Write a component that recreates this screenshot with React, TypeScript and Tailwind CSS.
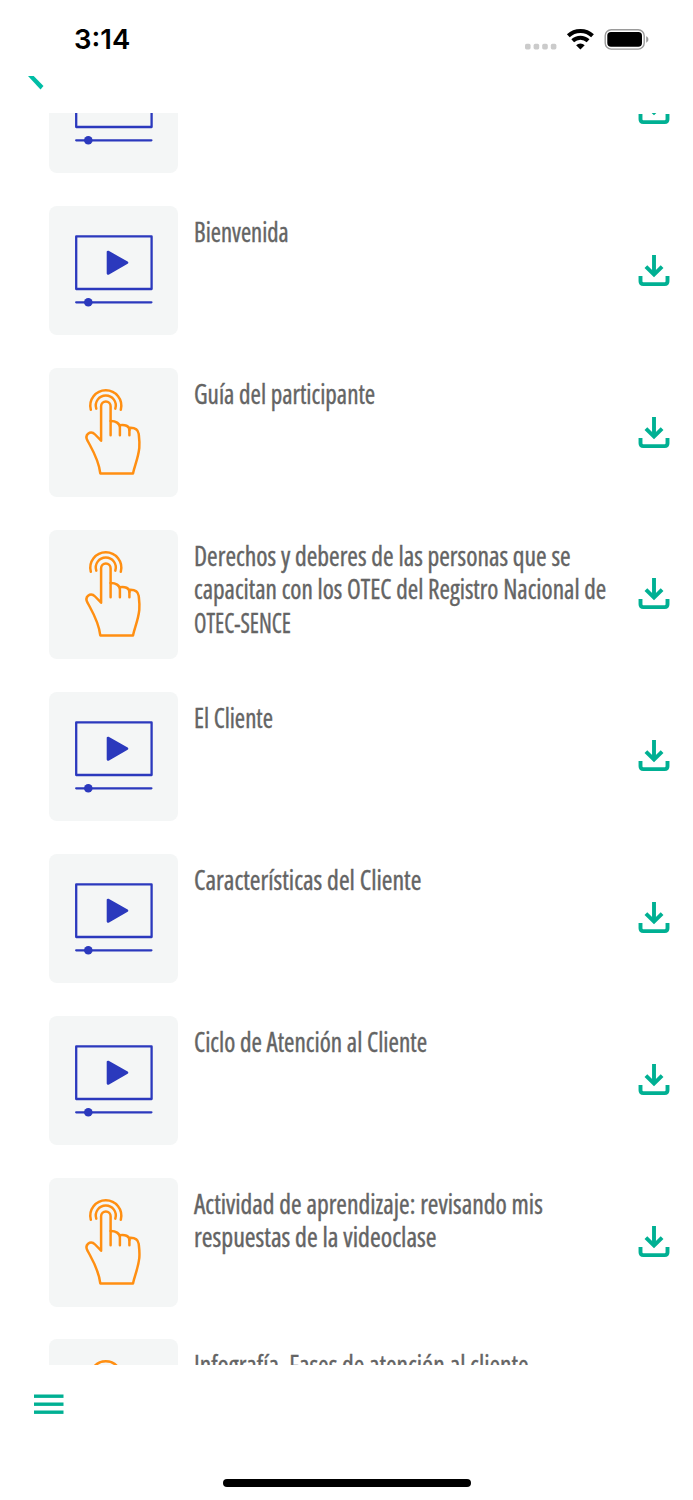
import React, { useLayoutEffect, useRef, useState } from 'react';

type Kind = 'video' | 'touch';

interface Line {
  text: string;
  width: number;
}

interface Lesson {
  id: number;
  kind: Kind;
  lines: Line[];
}

const lessons: Lesson[] = [
  { id: 1, kind: 'video', lines: [] },
  { id: 2, kind: 'video', lines: [{ text: 'Bienvenida', width: 95 }] },
  { id: 3, kind: 'touch', lines: [{ text: 'Guía del participante', width: 181 }] },
  {
    id: 4,
    kind: 'touch',
    lines: [
      { text: 'Derechos y deberes de las personas que se', width: 377 },
      { text: 'capacitan con los OTEC del Registro Nacional de', width: 412 },
      { text: 'OTEC-SENCE', width: 97 },
    ],
  },
  { id: 5, kind: 'video', lines: [{ text: 'El Cliente', width: 79 }] },
  { id: 6, kind: 'video', lines: [{ text: 'Características del Cliente', width: 227 }] },
  { id: 7, kind: 'video', lines: [{ text: 'Ciclo de Atención al Cliente', width: 233 }] },
  {
    id: 8,
    kind: 'touch',
    lines: [
      { text: 'Actividad de aprendizaje: revisando mis', width: 349 },
      { text: 'respuestas de la videoclase', width: 243 },
    ],
  },
  { id: 9, kind: 'touch', lines: [{ text: 'Infografía. Fases de atención al cliente', width: 335 }] },
];

// Squeezes a line horizontally so it takes exactly the given width
function CondensedLine({ text, width }: Line) {
  const ref = useRef<HTMLSpanElement>(null);
  const [scale, setScale] = useState(0.8);

  useLayoutEffect(() => {
    if (ref.current) setScale(width / ref.current.offsetWidth);
  }, [text, width]);

  return (
    <span className="block h-[33.4px] leading-[33.4px] whitespace-nowrap">
      <span ref={ref} className="inline-block origin-left" style={{ transform: `scaleX(${scale})` }}>
        {text}
      </span>
    </span>
  );
}

function VideoIcon() {
  return (
    <svg viewBox="0 0 129 129" className="size-full" fill="none" stroke="#2b39bd" strokeWidth="2.3">
      <rect x="27.2" y="30.4" width="75.4" height="52.6" strokeLinejoin="round" />
      <path d="M59 46v21.500l19-10.900z" fill="#2b39bd" strokeLinejoin="round" strokeWidth="2.600" />
      <path d="M27.200 96.300h75.200" strokeLinecap="round" />
      <circle cx="39.300" cy="96.300" r="4.300" fill="#2b39bd" stroke="none" />
    </svg>
  );
}

function TouchIcon() {
  return (
    <svg
      viewBox="0 0 129 129"
      className="size-full"
      fill="none"
      stroke="#ff8f12"
      strokeWidth="2.5"
      strokeLinecap="round"
      strokeLinejoin="round"
    >
      <path d="M41.800 41.700A15.500 15.500 0 1 1 71.800 41.700" />
      <path d="M47.300 40.600A10 10 0 1 1 66.300 40.600" />
      <path d="M61.600 67.300V38.200a4.750 4.750 0 0 0-9.500 0V72.700l-6-6.200c-2.200-2.200-5-2.300-7-.8-2.100 1.800-2 4.600-.4 7.300C43.500 82 49.700 91.500 51.300 105.400H84c1.500-7.500 5.200-15 6.300-25.500.5-6-.1-9.600-.6-14-.7-4.200-4.300-6.300-9.300-6v7.400" />
      <path d="M61.600 53c5-.1 9.300 2.300 9.300 6.500v7.800" />
      <path d="M70.900 57.200c5-.9 9.500.8 9.500 4.700" />
    </svg>
  );
}

function DownloadIcon() {
  return (
    <svg viewBox="0 0.9 32 32" className="size-8" fill="none" stroke="#00b093" strokeWidth="3.900">
      <path d="M2.500 22V27.200q0 2.800 2.800 2.800H26.700q2.800 0 2.800-2.800V22" />
      <path d="M16 .8V20" />
      <path d="M7.900 12.500l8.100 8 8.100-8" />
    </svg>
  );
}

function StatusBar() {
  return (
    <div className="flex h-[76px] items-start justify-between pl-[74px] pr-[43px] pt-[25px]">
      <span className="font-['Inter',sans-serif] text-[27.5px] leading-[29px] font-semibold text-black">3:14</span>
      <svg viewBox="0 0 126 26" className="mt-[2px] h-[26px] w-[126px]">
        <g fill="#cbcbcb">
          <rect x="1" y="16.800" width="5.600" height="5.600" rx="1.600" />
          <rect x="9.600" y="16.800" width="5.600" height="5.600" rx="1.600" />
          <rect x="18.200" y="16.800" width="5.600" height="5.600" rx="1.600" />
          <rect x="26.800" y="16.800" width="5.600" height="5.600" rx="1.600" />
        </g>
        <g fill="none" stroke="#000" strokeWidth="4">
          <path d="M44.300 8.800a17.600 17.600 0 0 1 24.200 0" />
          <path d="M48.700 13.700a11.200 11.200 0 0 1 15.400 0" />
        </g>
        <path d="M56.400 22.500l-4.300-4.300a6.200 6.200 0 0 1 8.600 0z" />
        <rect x="81.200" y="2.700" width="39" height="19.400" rx="6" fill="none" stroke="#9a9a9a" strokeWidth="1.400" />
        <rect x="83.300" y="5" width="34.700" height="14.800" rx="3.700" />
        <path d="M122.200 9.300c2.900 1.200 2.900 5.200 0 6.400z" fill="#9a9a9a" />
      </svg>
    </div>
  );
}

function LessonRow({ lesson }: { lesson: Lesson }) {
  return (
    <li className="flex h-[129px] shrink-0">
      <div className="w-[129px] shrink-0 overflow-hidden rounded-[8px] bg-[#f4f6f6]">
        {lesson.kind === 'video' ? <VideoIcon /> : <TouchIcon />}
      </div>
      <div className="ml-4 min-w-0 flex-1 pt-[9px] text-[28px] text-[#646464] font-['Open_Sans',sans-serif] [font-stretch:75%] [-webkit-text-stroke:0.4px_#646464]">
        {lesson.lines.map(line => (
          <CondensedLine key={line.text} text={line.text} width={line.width} />
        ))}
      </div>
      <button className="flex w-8 shrink-0 items-center justify-center">
        <DownloadIcon />
      </button>
    </li>
  );
}

export default function App() {
  return (
    <div className="flex h-[1500px] w-[693px] flex-col overflow-hidden bg-white">
      <StatusBar />
      <header className="h-[37px] shrink-0 pl-7">
        {/* back arrow, mostly hidden above the header */}
        <svg viewBox="0 0 16 14" className="h-[14px] w-4">
          <path d="M0 0h5.700L15.500 10l-3 3.400z" fill="#00bda5" />
        </svg>
      </header>

      <main className="h-[1252px] shrink-0 overflow-hidden">
        <ul className="-mt-[68.8px] flex flex-col gap-[32.92px] pl-[49px] pr-[23px]">
          {lessons.map(lesson => (
            <LessonRow key={lesson.id} lesson={lesson} />
          ))}
        </ul>
      </main>

      <footer className="flex flex-1 flex-col justify-between pb-[13px] pt-[29px]">
        <button className="ml-[34px] w-[30px]">
          <svg viewBox="0 0 30 20" className="h-5 w-[30px]" fill="#00b093">
            <rect y="0.500" width="29.500" height="3.400" />
            <rect y="8.500" width="29.500" height="3.400" />
            <rect y="16.500" width="29.500" height="3.400" />
          </svg>
        </button>
        <div className="mx-auto h-[8px] w-[248px] rounded-full bg-black" />
      </footer>
    </div>
  );
}
